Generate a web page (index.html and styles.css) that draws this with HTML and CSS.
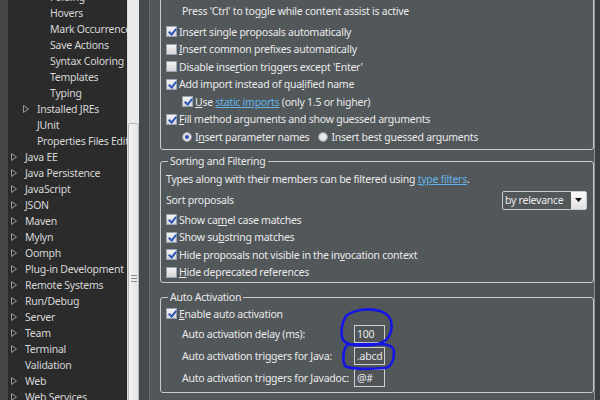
FILE: index.html
```html
<!DOCTYPE html>
<html>
<head>
<meta charset="utf-8">
<link rel="stylesheet" href="styles.css">
</head>
<body>
<div class="app">
  <div class="edge"></div>
  <div class="tree">
    <div class="tree-list">
      <div class="node l2"><span class="tw"></span>Folding</div>
      <div class="node l2"><span class="tw"></span>Hovers</div>
      <div class="node l2"><span class="tw"></span>Mark Occurrences</div>
      <div class="node l2"><span class="tw"></span>Save Actions</div>
      <div class="node l2"><span class="tw"></span>Syntax Coloring</div>
      <div class="node l2"><span class="tw"></span>Templates</div>
      <div class="node l2"><span class="tw"></span>Typing</div>
      <div class="node l1"><span class="tw"><svg width="6" height="8" viewBox="0 0 6 8"><polygon points="0.5,0.5 5.5,4 0.5,7.5" /></svg></span>Installed JREs</div>
      <div class="node l1"><span class="tw"></span>JUnit</div>
      <div class="node l1"><span class="tw"></span>Properties Files Editor</div>
      <div class="node"><span class="tw"><svg width="6" height="8" viewBox="0 0 6 8"><polygon points="0.5,0.5 5.5,4 0.5,7.5" /></svg></span>Java EE</div>
      <div class="node"><span class="tw"><svg width="6" height="8" viewBox="0 0 6 8"><polygon points="0.5,0.5 5.5,4 0.5,7.5" /></svg></span>Java Persistence</div>
      <div class="node"><span class="tw"><svg width="6" height="8" viewBox="0 0 6 8"><polygon points="0.5,0.5 5.5,4 0.5,7.5" /></svg></span>JavaScript</div>
      <div class="node"><span class="tw"><svg width="6" height="8" viewBox="0 0 6 8"><polygon points="0.5,0.5 5.5,4 0.5,7.5" /></svg></span>JSON</div>
      <div class="node"><span class="tw"><svg width="6" height="8" viewBox="0 0 6 8"><polygon points="0.5,0.5 5.5,4 0.5,7.5" /></svg></span>Maven</div>
      <div class="node"><span class="tw"><svg width="6" height="8" viewBox="0 0 6 8"><polygon points="0.5,0.5 5.5,4 0.5,7.5" /></svg></span>Mylyn</div>
      <div class="node"><span class="tw"><svg width="6" height="8" viewBox="0 0 6 8"><polygon points="0.5,0.5 5.5,4 0.5,7.5" /></svg></span>Oomph</div>
      <div class="node"><span class="tw"><svg width="6" height="8" viewBox="0 0 6 8"><polygon points="0.5,0.5 5.5,4 0.5,7.5" /></svg></span>Plug-in Development</div>
      <div class="node"><span class="tw"><svg width="6" height="8" viewBox="0 0 6 8"><polygon points="0.5,0.5 5.5,4 0.5,7.5" /></svg></span>Remote Systems</div>
      <div class="node"><span class="tw"><svg width="6" height="8" viewBox="0 0 6 8"><polygon points="0.5,0.5 5.5,4 0.5,7.5" /></svg></span>Run/Debug</div>
      <div class="node"><span class="tw"><svg width="6" height="8" viewBox="0 0 6 8"><polygon points="0.5,0.5 5.5,4 0.5,7.5" /></svg></span>Server</div>
      <div class="node"><span class="tw"><svg width="6" height="8" viewBox="0 0 6 8"><polygon points="0.5,0.5 5.5,4 0.5,7.5" /></svg></span>Team</div>
      <div class="node"><span class="tw"><svg width="6" height="8" viewBox="0 0 6 8"><polygon points="0.5,0.5 5.5,4 0.5,7.5" /></svg></span>Terminal</div>
      <div class="node"><span class="tw"></span>Validation</div>
      <div class="node"><span class="tw"><svg width="6" height="8" viewBox="0 0 6 8"><polygon points="0.5,0.5 5.5,4 0.5,7.5" /></svg></span>Web</div>
      <div class="node"><span class="tw"><svg width="6" height="8" viewBox="0 0 6 8"><polygon points="0.5,0.5 5.5,4 0.5,7.5" /></svg></span>Web Services</div>
    </div>
  </div>
  <div class="vscroll">
    <div class="thumb"><span class="grip"></span></div>
  </div>
  <div class="sash"></div>
  <div class="main">
    <div class="group g1">
      <div class="row hint">Press 'Ctrl' to toggle while content assist is active</div>
      <div class="row"><span class="cb on"></span>Insert single proposals automatically</div>
      <div class="row"><span class="cb"></span><u>I</u>nsert common prefixes automatically</div>
      <div class="row"><span class="cb"></span>Disable inse<u>r</u>tion triggers except 'Enter'</div>
      <div class="row"><span class="cb on"></span>Add import instead of qua<u>l</u>ified name</div>
      <div class="row sub"><span class="cb on"></span><span><u>U</u>se <a class="link">static imports</a> (only 1.5 or higher)</span></div>
      <div class="row"><span class="cb on"></span><u>F</u>ill method arguments and show guessed arguments</div>
      <div class="row sub radios">
        <span class="opt"><span class="rb on"></span>I<u>n</u>sert parameter names</span>
        <span class="opt"><span class="rb"></span>Insert best guessed arguments</span>
      </div>
    </div>

    <fieldset class="group g2">
      <legend>Sorting and Filtering</legend>
      <div class="row text"><span>Types along with their members can be filtered using <a class="link">type filters</a>.</span></div>
      <div class="row text sortrow">
        <span>Sort proposals</span>
        <span class="combo"><span class="combo-val">by relevance</span><span class="combo-btn"><svg width="7" height="4" viewBox="0 0 7 4"><polygon points="0,0 7,0 3.5,4" /></svg></span></span>
      </div>
      <div class="row"><span class="cb on"></span>Show ca<u>m</u>el case matches</div>
      <div class="row"><span class="cb on"></span>Show su<u>b</u>string matches</div>
      <div class="row"><span class="cb on"></span>Hide proposals not visible in the in<u>v</u>ocation context</div>
      <div class="row"><span class="cb"></span><u>H</u>ide deprecated references</div>
    </fieldset>

    <fieldset class="group g3">
      <legend>Auto Activation</legend>
      <div class="row"><span class="cb on"></span><u>E</u>nable auto activation</div>
      <div class="fields">
        <span class="flabel">Auto activation delay (ms):</span><span class="field">100</span>
        <span class="flabel">Auto activation triggers for Java:</span><span class="field">.abcd</span>
        <span class="flabel">Auto activation triggers for Javadoc:</span><span class="field">@#</span>
      </div>
    </fieldset>
  </div>
  <div class="rstrip"></div>
</div>
<svg class="marks" width="600" height="400" viewBox="0 0 600 400">
  <path d="M346,316 C342,322 340,333 343,340 C347,346 360,346 372,345 C383,344 389,340 391,331 C393,322 390,314 380,311 C370,308 355,309 346,316" />
  <path d="M347,345 C343,350 342,360 345,366 C352,370 372,369 386,368 C392,366 394,360 394,352 C394,346 388,344 378,344 C366,344 355,344 347,345" />
</svg>
</body>
</html>
```
FILE: styles.css
```css
html, body {
  margin: 0;
  padding: 0;
}
body {
  width: 600px;
  height: 400px;
  overflow: hidden;
  position: relative;
  font-family: "Noto Sans", "Open Sans", sans-serif;
  font-size: 10.5px;
  letter-spacing: -0.25px;
  color: #eaeaea;
  background: #52575a;
}
.app {
  display: flex;
  height: 400px;
}
.edge {
  width: 8px;
  background: #434546;
}
.tree {
  width: 119px;
  background: #2b2b2b;
  overflow: hidden;
  color: #d6d6d6;
}
.tree-list {
  margin-top: -11px;
}
.node {
  height: 16px;
  display: flex;
  align-items: center;
  white-space: nowrap;
}
.node.l1 { padding-left: 12px; }
.node.l2 { padding-left: 25px; }
.tw {
  width: 17px;
  flex: none;
  display: flex;
  align-items: center;
  padding-left: 3px;
  box-sizing: border-box;
}
.tw svg polygon {
  fill: none;
  stroke: #9a9a9a;
  stroke-width: 1;
}
.vscroll {
  width: 12px;
  background: #e9e9e9;
  border-left: 1px solid #dcdcdc;
  box-sizing: border-box;
}
.thumb {
  margin-top: 123px;
  height: 300px;
  background: linear-gradient(to right, #f4f4f4, #e4e4e4);
  border: 1px solid #b8b8b8;
  border-radius: 2px;
  position: relative;
}
.grip {
  position: absolute;
  top: 151px;
  left: 2px;
  width: 6px;
  height: 5px;
  border-top: 1px solid #8a8a8a;
  border-bottom: 1px solid #8a8a8a;
}
.grip::after {
  content: "";
  position: absolute;
  top: 2px;
  left: 0;
  width: 6px;
  border-top: 1px solid #8a8a8a;
}
.sash {
  width: 11px;
  background: #45494b;
  border-right: 1px solid #6a6e70;
  box-sizing: border-box;
}
.main {
  width: 444px;
  padding-left: 10px;
  box-sizing: border-box;
  background: #52575a;
}
.rstrip {
  width: 6px;
  background: #3c3f41;
  border-left: 1px solid #8c8f91;
  box-sizing: border-box;
}
.group {
  border: 1px solid #c9cacb;
  border-radius: 3px;
  margin: 0;
  min-width: 0;
}
.g1 {
  margin-top: -9px;
  padding: 10px 0 3px 5px;
}
.row {
  height: 17.5px;
  display: flex;
  align-items: center;
  white-space: nowrap;
}
.row.hint {
  height: 18px;
  padding-left: 16px;
  margin-bottom: 3px;
}
.row.sub {
  padding-left: 16px;
}
.cb {
  width: 11px;
  height: 11px;
  box-sizing: border-box;
  border: 1px solid #9aa4b4;
  background: linear-gradient(#f2f2f2, #d6d6d6);
  margin-right: 2px;
  position: relative;
  flex: none;
}
.cb.on::after {
  content: "";
  position: absolute;
  left: 3px;
  top: 0px;
  width: 3px;
  height: 6px;
  border-right: 2px solid #2f57b8;
  border-bottom: 2px solid #2f57b8;
  transform: rotate(40deg);
}
.rb {
  width: 10px;
  height: 10px;
  border-radius: 50%;
  box-sizing: border-box;
  border: 1px solid #9ea3a8;
  background: radial-gradient(#f4f4f4, #cfcfcf);
  margin-right: 3px;
  position: relative;
  flex: none;
}
.rb.on::after {
  content: "";
  position: absolute;
  left: 2px;
  top: 2px;
  width: 4px;
  height: 4px;
  border-radius: 50%;
  background: #2a4fae;
}
.radios {
  gap: 9px;
}
.opt {
  display: flex;
  align-items: center;
}
u {
  text-decoration: underline;
  text-underline-offset: 1px;
}
.link {
  color: #62b4e8;
  text-decoration: underline;
}
legend {
  padding: 0 2px;
  margin-left: 2px;
  line-height: 14px;
}
.g2 {
  margin-top: 4.5px;
  padding: 1px 6px 1px 5px;
}
.row.text {
  height: 20px;
}
.row.text.sortrow {
  justify-content: space-between;
  height: 22px;
}
.combo {
  display: flex;
  width: 85px;
  height: 19px;
  box-sizing: border-box;
  border: 1px solid #c9cacb;
  border-radius: 2px;
  background: #52575a;
}
.combo-val {
  flex: 1;
  padding-left: 2px;
  line-height: 17px;
}
.combo-btn {
  width: 15px;
  background: linear-gradient(#fbfbfb, #e2e2e2);
  display: flex;
  align-items: center;
  justify-content: center;
}
.combo-btn svg polygon {
  fill: #111;
}
.g3 {
  margin-top: 7px;
  padding: 1px 6px 5px 5px;
}
.fields {
  display: grid;
  grid-template-columns: 172px 31px;
  row-gap: 4px;
  padding-left: 16px;
  margin-top: 2.5px;
}
.flabel {
  height: 18px;
  display: flex;
  align-items: center;
  white-space: nowrap;
}
.field {
  height: 18px;
  box-sizing: border-box;
  border: 1px solid #cfd0d1;
  padding-left: 2px;
  line-height: 16px;
  background: #505457;
}
.marks {
  position: absolute;
  left: 0;
  top: 0;
  pointer-events: none;
}
.marks path {
  fill: none;
  stroke: #1515e6;
  stroke-width: 2.6;
  stroke-linecap: round;
}
```
